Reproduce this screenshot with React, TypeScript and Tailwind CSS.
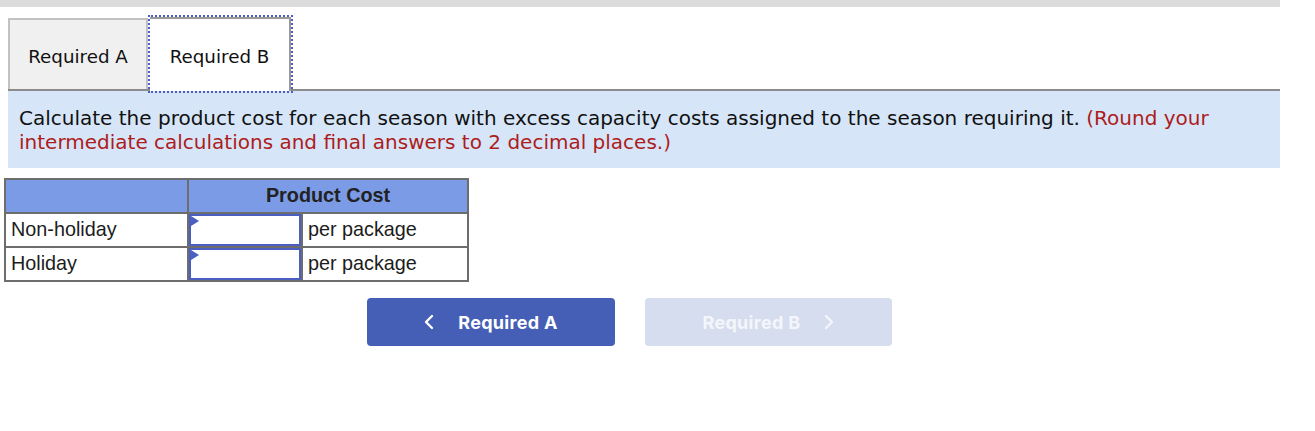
const verdana = { fontFamily: '"DejaVu Sans", Verdana, sans-serif' };

const rows = ['Non-holiday', 'Holiday'];

const Chevron = ({ dir }: { dir: 'left' | 'right' }) => (
  <svg width="10" height="16" viewBox="0 0 10 16" fill="none" className="shrink-0">
    <polyline
      points={dir === 'left' ? '8,2 2,8 8,14' : '2,2 8,8 2,14'}
      stroke="currentColor"
      strokeWidth="2.4"
      strokeLinecap="round"
      strokeLinejoin="round"
    />
  </svg>
);

const AnswerRow = ({ label }: { label: string }) => (
  <div className="flex h-[34px] border-t-2 border-[#6d6d6d]">
    <div className="flex w-[181px] items-center pl-[5px]">{label}</div>
    <div className="w-[2px] bg-[#6d6d6d]" />
    <div className="relative w-[112px] border-2 border-[#4a5fc1] bg-white">
      <span className="absolute left-0 top-0 h-0 w-0 border-y-[5px] border-l-[8px] border-y-transparent border-l-[#4a5fc1]" />
    </div>
    <div className="w-[2px] bg-[#6d6d6d]" />
    <div className="flex flex-1 items-center pl-[5px]">per package</div>
  </div>
);

export default function App() {
  return (
    <div className="h-[431px] w-[1315px] bg-white">
      <div className="h-[7px] w-[1280px] bg-[#dcdcdc]" />

      <div className="ml-[8px] mt-[9px] w-[1272px]" style={verdana}>
        <div className="flex h-[75px] items-end border-b-2 border-[#8c8c8c]">
          <button className="h-[71px] w-[140px] border-2 border-b-0 border-[#c2c2c2] bg-[#f0f0f0] pt-[4px] text-[18.3px] text-[#111]">
            Required A
          </button>
          <button className="relative -mb-[2px] ml-[2px] h-[74px] w-[141px] border-r-2 border-t-2 border-[#9a9a9a] bg-white pt-[4px] text-[18.3px] text-[#111] outline-2 outline-dotted outline-[#4a5fc1]">
            Required B
          </button>
        </div>

        <div className="bg-[#d6e6f8] pb-[14px] pl-[11px] pt-[15px] text-[20px] leading-[24px] text-[#111]">
          Calculate the product cost for each season with excess capacity costs assigned to the season requiring it.{' '}
          <span className="text-[#ad1c1c]">
            (Round your
            <br />
            intermediate calculations and final answers to 2 decimal places.)
          </span>
        </div>
      </div>

      <div
        className="ml-[4px] mt-[10px] w-[465px] border-2 border-[#6d6d6d] text-[19.8px] text-[#1c1c1c]"
        style={{ fontFamily: '"Liberation Sans", Arial, sans-serif' }}
      >
        <div className="flex h-[32px] bg-[#7b9be6]">
          <div className="w-[181px]" />
          <div className="w-[2px] bg-[#6d6d6d]" />
          <div className="flex flex-1 items-center justify-center font-bold text-[#222]">Product Cost</div>
        </div>
        {rows.map((r) => (
          <AnswerRow key={r} label={r} />
        ))}
      </div>

      <div className="ml-[367px] mt-[16px] flex gap-[30px]" style={{ fontFamily: 'Inter, sans-serif' }}>
        <button className="flex h-[48px] w-[248px] items-center justify-center gap-[24px] rounded-[4px] bg-[#455eb6] text-[18px] font-bold tracking-[0.3px] text-white">
          <Chevron dir="left" />
          Required A
        </button>
        <button className="flex h-[48px] w-[247px] items-center justify-center gap-[24px] rounded-[4px] bg-[#d5ddef] text-[18px] font-bold tracking-[0.3px] text-[#f4f6fb]">
          Required B
          <Chevron dir="right" />
        </button>
      </div>
    </div>
  );
}
